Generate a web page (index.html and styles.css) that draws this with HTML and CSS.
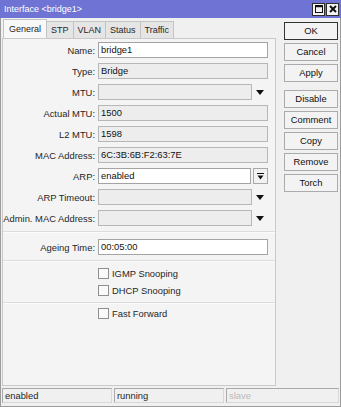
FILE: index.html
```html
<!DOCTYPE html>
<html lang="en">
<head>
  <meta charset="UTF-8" />
  <title>Interface &lt;bridge1&gt;</title>
  <link rel="stylesheet" href="styles.css">
</head>
<body>
  <div class="window">

    <!-- Title bar -->
    <div class="titlebar">
      <span class="title">Interface &lt;bridge1&gt;</span>
      <div class="tb-buttons">
        <span class="tb-btn">
          <svg width="8" height="8" viewBox="0 0 8 8"><rect x="0.5" y="0.5" width="7" height="7" fill="none" stroke="#111"/><line x1="0" y1="1.5" x2="8" y2="1.5" stroke="#111" stroke-width="1.5"/></svg>
        </span>
        <span class="tb-btn">
          <svg width="8" height="8" viewBox="0 0 8 8"><path d="M1 1L7 7M7 1L1 7" stroke="#111" stroke-width="2"/></svg>
        </span>
      </div>
    </div>

    <div class="body">
      <div class="main">
        <div class="left">
          <!-- Tabs -->
          <div class="tabs">
            <div class="tab active">General</div>
            <div class="tab">STP</div>
            <div class="tab">VLAN</div>
            <div class="tab">Status</div>
            <div class="tab">Traffic</div>
          </div>

          <!-- General panel -->
          <div class="panel">
            <div class="row"><div class="label">Name:</div><div class="field edit">bridge1</div></div>
            <div class="row"><div class="label">Type:</div><div class="field">Bridge</div></div>
            <div class="row">
              <div class="label">MTU:</div><div class="field short"></div>
              <div class="arrow"><svg width="8" height="5" viewBox="0 0 8 5"><path d="M0 0H8L4 5Z" fill="#111"/></svg></div>
            </div>
            <div class="row"><div class="label">Actual MTU:</div><div class="field">1500</div></div>
            <div class="row"><div class="label">L2 MTU:</div><div class="field">1598</div></div>
            <div class="row"><div class="label">MAC Address:</div><div class="field">6C:3B:6B:F2:63:7E</div></div>
            <div class="row">
              <div class="label">ARP:</div><div class="field edit arp">enabled</div>
              <div class="sel-btn"><svg width="7" height="7" viewBox="0 0 7 7"><path d="M0 0.5H7" stroke="#111"/><path d="M0.5 2.5H6.5L3.5 6.5Z" fill="#111"/></svg></div>
            </div>
            <div class="row">
              <div class="label">ARP Timeout:</div><div class="field short"></div>
              <div class="arrow"><svg width="8" height="5" viewBox="0 0 8 5"><path d="M0 0H8L4 5Z" fill="#111"/></svg></div>
            </div>
            <div class="row">
              <div class="label">Admin. MAC Address:</div><div class="field short"></div>
              <div class="arrow"><svg width="8" height="5" viewBox="0 0 8 5"><path d="M0 0H8L4 5Z" fill="#111"/></svg></div>
            </div>

            <div class="sep"></div>
            <div class="row"><div class="label">Ageing Time:</div><div class="field edit">00:05:00</div></div>

            <div class="sep sep-check"></div>
            <div class="check"><span class="box"></span>IGMP Snooping</div>
            <div class="check"><span class="box"></span>DHCP Snooping</div>

            <div class="sep sep-last"></div>
            <div class="check"><span class="box"></span>Fast Forward</div>
          </div>
        </div>

        <!-- Buttons -->
        <div class="buttons">
          <div class="btn default">OK</div>
          <div class="btn">Cancel</div>
          <div class="btn">Apply</div>
          <div class="btn group">Disable</div>
          <div class="btn">Comment</div>
          <div class="btn">Copy</div>
          <div class="btn">Remove</div>
          <div class="btn">Torch</div>
        </div>
      </div>

      <!-- Status bar -->
      <div class="statusbar">
        <div class="status s1">enabled</div>
        <div class="status s2">running</div>
        <div class="status s3 dim">slave</div>
      </div>
    </div>
  </div>
</body>
</html>
```

FILE: styles.css
```css
* { box-sizing: border-box; }
body {
  margin: 0; background: #f0f0f0;
  font-family: "Liberation Sans", Arial, sans-serif; font-size: 9.4px; color: #262626;
}
.window { width: 341px; height: 407px; display: flex; flex-direction: column; background: #f0f0f0; }

.titlebar {
  height: 18px; flex: none; background: #6f73d3; color: #fff;
  display: flex; align-items: center; justify-content: space-between;
  padding: 0 2px 0 4px;
}
.title { font-size: 9px; }
.tb-buttons { display: flex; gap: 1px; }
.tb-btn {
  width: 13px; height: 13px; background: #f4f4f4; border: 1px solid #2e2e2e;
  display: flex; align-items: center; justify-content: center;
}

.body {
  flex: 1; display: flex; flex-direction: column;
  border: 1px solid #9c9c9c; border-top: none;
}
.main { display: flex; height: 368px; }
.left { margin-left: 1px; width: 274px; display: flex; flex-direction: column; }

.tabs { height: 20px; display: flex; align-items: flex-end; padding-left: 1px; font-size: 9px; }
.tab {
  height: 17px; padding: 0 4px; margin-right: -1px;
  border: 1px solid #c3c3c3; border-bottom: none; background: #e5e5e5;
  display: flex; align-items: center;
}
.tab.active { height: 19px; background: #f8f8f8; padding: 0 5px; }

.panel {
  height: 348px; border: 1px solid #c9c9c9; background: #f4f4f4;
  padding-top: 3px;
}
.row { display: flex; align-items: center; height: 16px; margin-bottom: 5px; }
.label { width: 95px; text-align: right; padding-right: 3px; white-space: nowrap; }
.field {
  width: 170px; height: 16px; line-height: 14px; padding-left: 2px;
  border: 1px solid #b7b7b7; background: #ededed; color: #111;
}
.field.edit { background: #fff; border-color: #a3a3a3; }
.field.short { width: 154px; }
.field.arp { width: 153px; }
.arrow { width: 16px; display: flex; justify-content: center; }
.sel-btn {
  width: 15px; height: 16px; margin-left: 2px;
  border: 1px solid #a9a9a9; background: #f2f2f2;
  display: flex; align-items: center; justify-content: center;
}

.sep { height: 2px; border-top: 1px solid #dcdcdc; border-bottom: 1px solid #fbfbfb; margin: 1px 0 6px; }
.sep-check { margin: 3px 0 5px; }
.sep-last { margin: 5px 0 3px; }
.check { display: flex; align-items: center; height: 13px; margin-bottom: 4px; padding-left: 95px; }
.box { width: 11px; height: 11px; border: 1px solid #8f8f8f; background: #fafafa; margin-right: 3px; }

.buttons { margin-left: 8px; width: 54px; padding-top: 4px; display: flex; flex-direction: column; gap: 3px; }
.btn {
  height: 18px; line-height: 16px; text-align: center;
  border: 1px solid #ababab; background: #f3f3f3; color: #111;
}
.btn.default { border-color: #333; }
.btn.group { margin-top: 5px; }

.statusbar { display: flex; gap: 2px; padding: 2px 1px 0; }
.status {
  height: 15px; line-height: 13px; padding-left: 2px;
  border: 1px solid #a9a9a9; border-right-color: #d8d8d8; border-bottom-color: #d8d8d8;
  background: #f0f0f0;
}
.s1, .s2 { width: 110px; }
.s3 { flex: 1; }
.dim { color: #b9b9b9; }
```
